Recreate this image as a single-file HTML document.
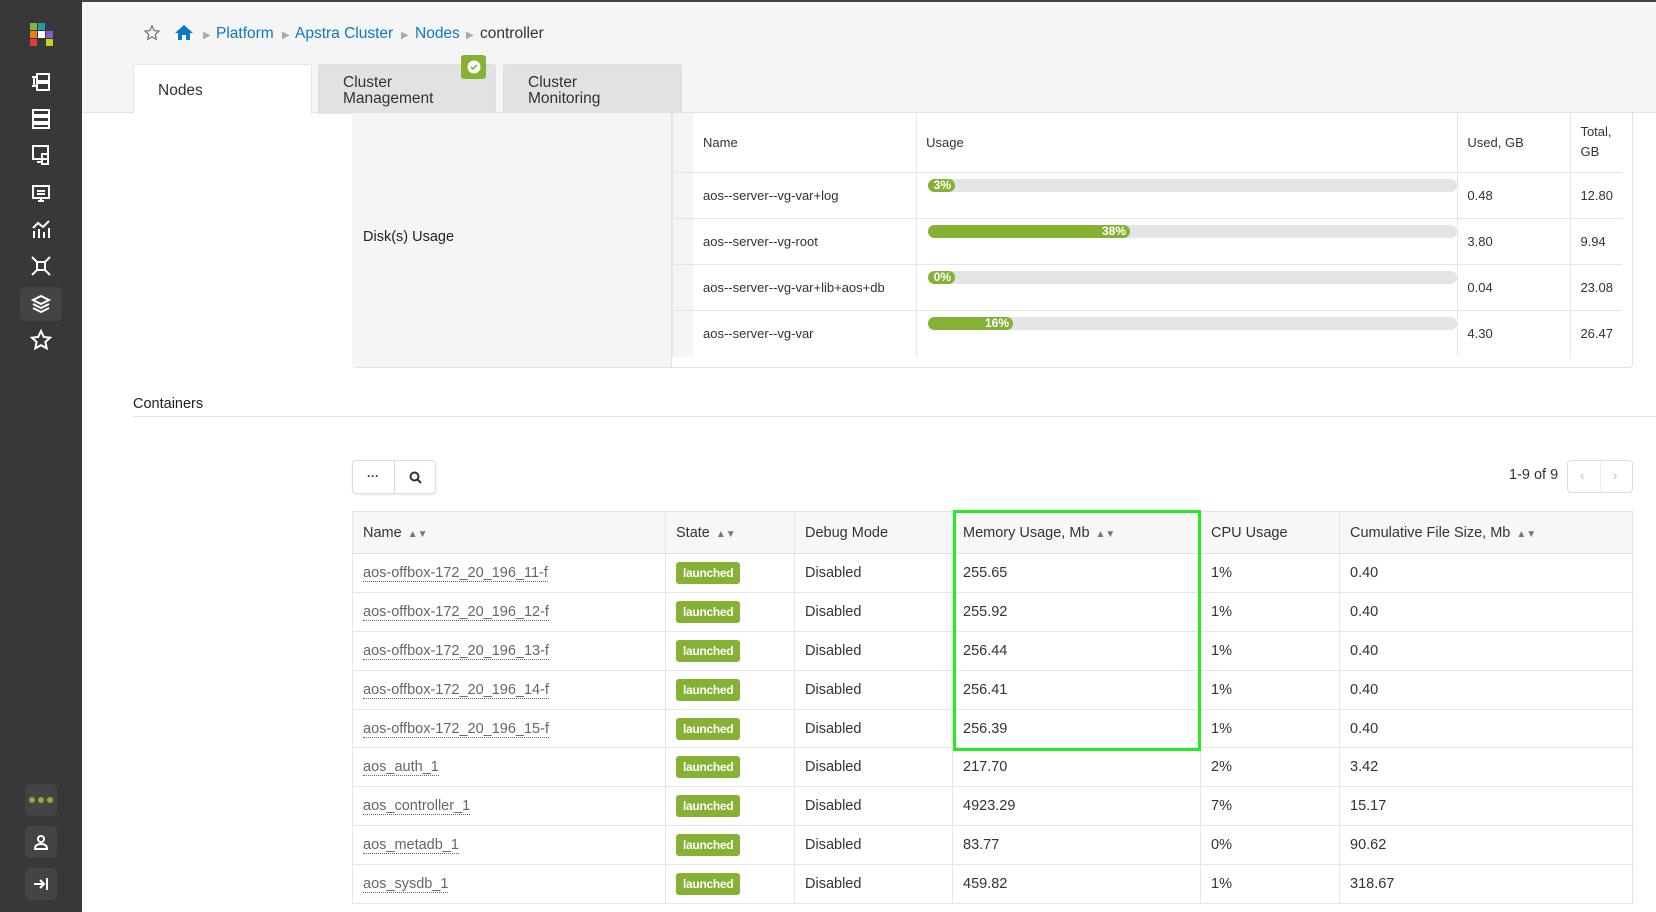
<!DOCTYPE html>
<html><head><meta charset="utf-8"><style>
*{box-sizing:border-box;margin:0;padding:0}
body{width:1656px;height:912px;overflow:hidden;background:#fff;font-family:"Liberation Sans",sans-serif;color:#333;position:relative}
.abs{position:absolute}
#side{left:0;top:0;width:82px;height:912px;background:#383838}
.si{position:absolute;left:20px;width:42px;height:34px;display:flex;align-items:center;justify-content:center}
#top{left:82px;top:0;width:1574px;height:113px;background:#f5f5f5;border-top:2px solid #444;border-bottom:1px solid #e2e2e2}
.bc{top:25px;font-size:15.5px;color:#0a7bc2}
.tab{top:64px;height:50px;background:#e2e2e2;border:1px solid #ddd;border-bottom:none;border-radius:3px 3px 0 0;font-size:15.5px;color:#333;padding:10px 0 0 24px;line-height:16px}
td,th{font-weight:normal;text-align:left}
.dt{position:absolute;left:672px;top:113px;width:950px;border-collapse:collapse;font-size:13px}
.dt td{border-bottom:1px solid #e6e6e6;border-left:1px solid #e6e6e6;padding:0 9px;vertical-align:middle}
.bar{position:absolute;height:13px;border-radius:7px;background:#e4e4e4}
.fill{height:13px;border-radius:7px;background:#85b135;color:#fff;font-size:12px;line-height:13px;text-align:right;padding-right:4px;font-weight:bold}
.ct{position:absolute;left:352px;top:511px;width:1281px;border-collapse:collapse;font-size:14.5px;border:1px solid #e2e2e2}
.ct th{background:#f7f7f7;height:42px;padding:0 10px;border-left:1px solid #e6e6e6;border-bottom:1px solid #e2e2e2}
.ct td{height:38.9px;padding:0 10px;border-left:1px solid #e6e6e6;border-bottom:1px solid #e6e6e6}
.ct a{color:#666;text-decoration:none;border-bottom:1px dotted #666}
.lb{display:inline-block;background:#85b135;color:#fff;font-size:12px;font-weight:bold;border-radius:3px;padding:4px 7px;letter-spacing:-.3px}
.sort{color:#777;font-size:10px;margin-left:6px}
</style></head><body>
<div id="side" class="abs">
 <svg class="abs" style="left:30px;top:23px" width="24" height="24"><rect x="0" y="0" width="7" height="7" fill="#80b838"/><rect x="8" y="0" width="7" height="7" fill="#1f9aa6"/><rect x="0" y="8" width="7" height="7" fill="#f07a1c"/><rect x="8" y="8" width="7" height="7" fill="#fff"/><rect x="16" y="8" width="7" height="7" fill="#8a5cc8"/><rect x="0" y="16" width="7" height="7" fill="#e23a3a"/><rect x="16" y="16" width="7" height="7" fill="#c6d21e"/></svg>
 <div class="si" style="top:65px"><svg width="20" height="20" fill="none" stroke="#fff" stroke-width="2"><rect x="6" y="2" width="12" height="7"/><rect x="6" y="11" width="12" height="7"/><path d="M1 5h5M1 14h5M3 5v9"/></svg></div>
 <div class="si" style="top:102px"><svg width="20" height="20" fill="none" stroke="#fff" stroke-width="2"><rect x="2" y="1" width="16" height="5"/><rect x="2" y="8" width="16" height="5"/><rect x="2" y="15" width="16" height="4"/></svg></div>
 <div class="si" style="top:138px"><svg width="20" height="20" fill="none" stroke="#fff" stroke-width="2"><rect x="2" y="1" width="15" height="13"/><rect x="11" y="9" width="6" height="10"/><path d="M6 17h5"/></svg></div>
 <div class="si" style="top:175px"><svg width="20" height="20" fill="none" stroke="#fff" stroke-width="2"><rect x="2" y="4" width="16" height="12"/><path d="M7 19h6M10 16v3M6 9h8M6 12h8"/></svg></div>
 <div class="si" style="top:212px"><svg width="20" height="20" fill="none" stroke="#fff" stroke-width="2"><path d="M3 19v-7M8 19v-9M13 19v-6M18 19v-10M2 9l5-5 5 4 6-6"/></svg></div>
 <div class="si" style="top:249px"><svg width="20" height="20" fill="none" stroke="#fff" stroke-width="2"><rect x="6" y="6" width="8" height="8"/><path d="M1 1l5 5M19 1l-5 5M1 19l5-5M19 19l-5-5"/></svg></div>
 <div class="si" style="top:287px;background:#444;border-radius:6px"><svg width="20" height="20" fill="none" stroke="#fff" stroke-width="2"><path d="M10 2l8 4-8 4-8-4zM2 10l8 4 8-4M2 14l8 4 8-4"/></svg></div>
 <div class="si" style="top:323px"><svg width="22" height="22" fill="none" stroke="#fff" stroke-width="2"><path d="M11 2l2.8 6 6.2.7-4.6 4.3 1.3 6.3L11 16.2 5.3 19.3l1.3-6.3L2 8.7 8.2 8z"/></svg></div>
 <div class="si" style="top:784px;left:25px;width:32px;height:32px;background:#444;border-radius:5px;gap:3px"><i style="width:6px;height:6px;border-radius:3px;background:#85b135"></i><i style="width:6px;height:6px;border-radius:3px;background:#85b135"></i><i style="width:6px;height:6px;border-radius:3px;background:#85b135"></i></div>
 <div class="si" style="top:826px;left:25px;width:32px;height:32px;background:#444;border-radius:5px"><svg width="16" height="16" fill="none" stroke="#fff" stroke-width="2"><circle cx="8" cy="5" r="3"/><path d="M2 15c0-4 3-5 6-5s6 1 6 5z"/></svg></div>
 <div class="si" style="top:868px;left:25px;width:32px;height:32px;background:#444;border-radius:5px"><svg width="16" height="16" fill="none" stroke="#fff" stroke-width="2"><path d="M1 8h10M7 4l4 4-4 4M14 2v12"/></svg></div>
</div>
<div id="top" class="abs"></div>
<svg class="abs" style="left:144px;top:25px" width="16" height="16" fill="none" stroke="#777" stroke-width="1.3"><path d="M8 1l2 4.5 5 .5-3.7 3.3 1 5L8 11.8 3.7 14.3l1-5L1 6l5-.5z"/></svg>
<svg class="abs" style="left:174px;top:24px" width="20" height="17" fill="#0a7bc2"><path d="M10 1l9 8h-3v7h-4v-5H8v5H4V9H1z"/></svg>
<div class="abs bc" style="left:203px;color:#aaa;font-size:10px;top:30px">▶</div>
<div class="abs bc" style="left:216px">Platform</div>
<div class="abs bc" style="left:282px;color:#aaa;font-size:10px;top:30px">▶</div>
<div class="abs bc" style="left:295px">Apstra Cluster</div>
<div class="abs bc" style="left:401px;color:#aaa;font-size:10px;top:30px">▶</div>
<div class="abs bc" style="left:415px">Nodes</div>
<div class="abs bc" style="left:466px;color:#aaa;font-size:10px;top:30px">▶</div>
<div class="abs bc" style="left:480px;color:#333">controller</div>
<div class="abs tab" style="left:133px;width:179px;background:#fff;padding-top:18px;border-color:#e6e6e6;height:50px">Nodes</div>
<div class="abs tab" style="left:318px;width:178px">Cluster<br>Management</div>
<div class="abs tab" style="left:503px;width:179px">Cluster<br>Monitoring</div>
<div class="abs" style="left:461px;top:55px;width:25px;height:24px;background:#85b135;border-radius:3px;display:flex;align-items:center;justify-content:center"><svg width="14" height="14"><circle cx="7" cy="7" r="6.5" fill="#fff"/><path d="M4 7l2 2 4-4" stroke="#85b135" stroke-width="1.6" fill="none"/></svg></div>

<div class="abs" style="left:352px;top:113px;width:1281px;height:255px;border:1px solid #e2e2e2;border-top:none;border-radius:0 0 4px 4px"></div>
<div class="abs" style="left:352px;top:113px;width:320px;height:254px;background:#f5f5f5;border-right:1px solid #e2e2e2"></div>
<div class="abs" style="left:672px;top:113px;width:21px;height:244px;background:#f5f5f5"></div>
<div class="abs" style="left:363px;top:229px;font-size:14.5px;color:#222">Disk(s) Usage</div>
<table class="dt">
<tr style="height:59px"><td style="width:246px;border-left:1px solid #e6e6e6;padding-left:30px">Name</td><td style="width:549px">Usage</td><td style="width:114px">Used, GB</td><td style="line-height:20px;padding-top:0">Total,<br>GB</td></tr>
<tr style="height:46px"><td style="padding-left:30px">aos--server--vg-var+log</td><td></td><td>0.48</td><td>12.80</td></tr>
<tr style="height:46px"><td style="padding-left:30px">aos--server--vg-root</td><td></td><td>3.80</td><td>9.94</td></tr>
<tr style="height:46px"><td style="padding-left:30px">aos--server--vg-var+lib+aos+db</td><td></td><td>0.04</td><td>23.08</td></tr>
<tr style="height:47px"><td style="padding-left:30px;border-bottom:none">aos--server--vg-var</td><td style="border-bottom:none"></td><td style="border-bottom:none">4.30</td><td style="border-bottom:none">26.47</td></tr>
</table>
<div class="bar" style="left:928px;top:179px;width:529px"><div class="fill" style="width:27px">3%</div></div>
<div class="bar" style="left:928px;top:225px;width:529px"><div class="fill" style="width:202px">38%</div></div>
<div class="bar" style="left:928px;top:271px;width:529px"><div class="fill" style="width:27px">0%</div></div>
<div class="bar" style="left:928px;top:317px;width:529px"><div class="fill" style="width:85px">16%</div></div>

<div class="abs" style="left:133px;top:396px;font-size:14.5px;color:#222">Containers</div>
<div class="abs" style="left:133px;top:416px;width:1523px;height:1px;background:#e2e2e2"></div>

<div class="abs" style="left:352px;top:460px;width:84px;height:34px;border:1px solid #ddd;border-radius:4px;box-shadow:0 1px 2px rgba(0,0,0,.08)"><div class="abs" style="left:41px;top:0;width:1px;height:32px;background:#ddd"></div><span class="abs" style="left:14px;top:8px;font-size:12px;font-weight:bold">···</span><svg class="abs" style="left:56px;top:10px" width="13" height="13" fill="none" stroke="#333" stroke-width="2"><circle cx="5.5" cy="5.5" r="4"/><path d="M8.5 8.5l3.5 3.5"/></svg></div>
<div class="abs" style="left:1509px;top:467px;font-size:14.5px;color:#333">1-9 of 9</div>
<div class="abs" style="left:1567px;top:460px;width:66px;height:33px;border:1px solid #ddd;border-radius:4px;color:#bbb;font-size:13px"><span class="abs" style="left:12px;top:7px">‹</span><div class="abs" style="left:32px;top:0;width:1px;height:31px;background:#eee"></div><span class="abs" style="left:45px;top:7px">›</span></div>

<table class="ct">
<tr><th style="width:313px">Name<span class="sort">▲▼</span></th><th style="width:129px">State<span class="sort">▲▼</span></th><th style="width:158px">Debug Mode</th><th style="width:248px">Memory Usage, Mb<span class="sort">▲▼</span></th><th style="width:139px">CPU Usage</th><th>Cumulative File Size, Mb<span class="sort">▲▼</span></th></tr>
<tr><td><a>aos-offbox-172_20_196_11-f</a></td><td><span class="lb">launched</span></td><td>Disabled</td><td>255.65</td><td>1%</td><td>0.40</td></tr>
<tr><td><a>aos-offbox-172_20_196_12-f</a></td><td><span class="lb">launched</span></td><td>Disabled</td><td>255.92</td><td>1%</td><td>0.40</td></tr>
<tr><td><a>aos-offbox-172_20_196_13-f</a></td><td><span class="lb">launched</span></td><td>Disabled</td><td>256.44</td><td>1%</td><td>0.40</td></tr>
<tr><td><a>aos-offbox-172_20_196_14-f</a></td><td><span class="lb">launched</span></td><td>Disabled</td><td>256.41</td><td>1%</td><td>0.40</td></tr>
<tr><td><a>aos-offbox-172_20_196_15-f</a></td><td><span class="lb">launched</span></td><td>Disabled</td><td>256.39</td><td>1%</td><td>0.40</td></tr>
<tr><td><a>aos_auth_1</a></td><td><span class="lb">launched</span></td><td>Disabled</td><td>217.70</td><td>2%</td><td>3.42</td></tr>
<tr><td><a>aos_controller_1</a></td><td><span class="lb">launched</span></td><td>Disabled</td><td>4923.29</td><td>7%</td><td>15.17</td></tr>
<tr><td><a>aos_metadb_1</a></td><td><span class="lb">launched</span></td><td>Disabled</td><td>83.77</td><td>0%</td><td>90.62</td></tr>
<tr><td><a>aos_sysdb_1</a></td><td><span class="lb">launched</span></td><td>Disabled</td><td>459.82</td><td>1%</td><td>318.67</td></tr>
</table>
<div class="abs" style="left:953px;top:510px;width:248px;height:241px;border:3px solid #22ee22"></div>
</body></html>
